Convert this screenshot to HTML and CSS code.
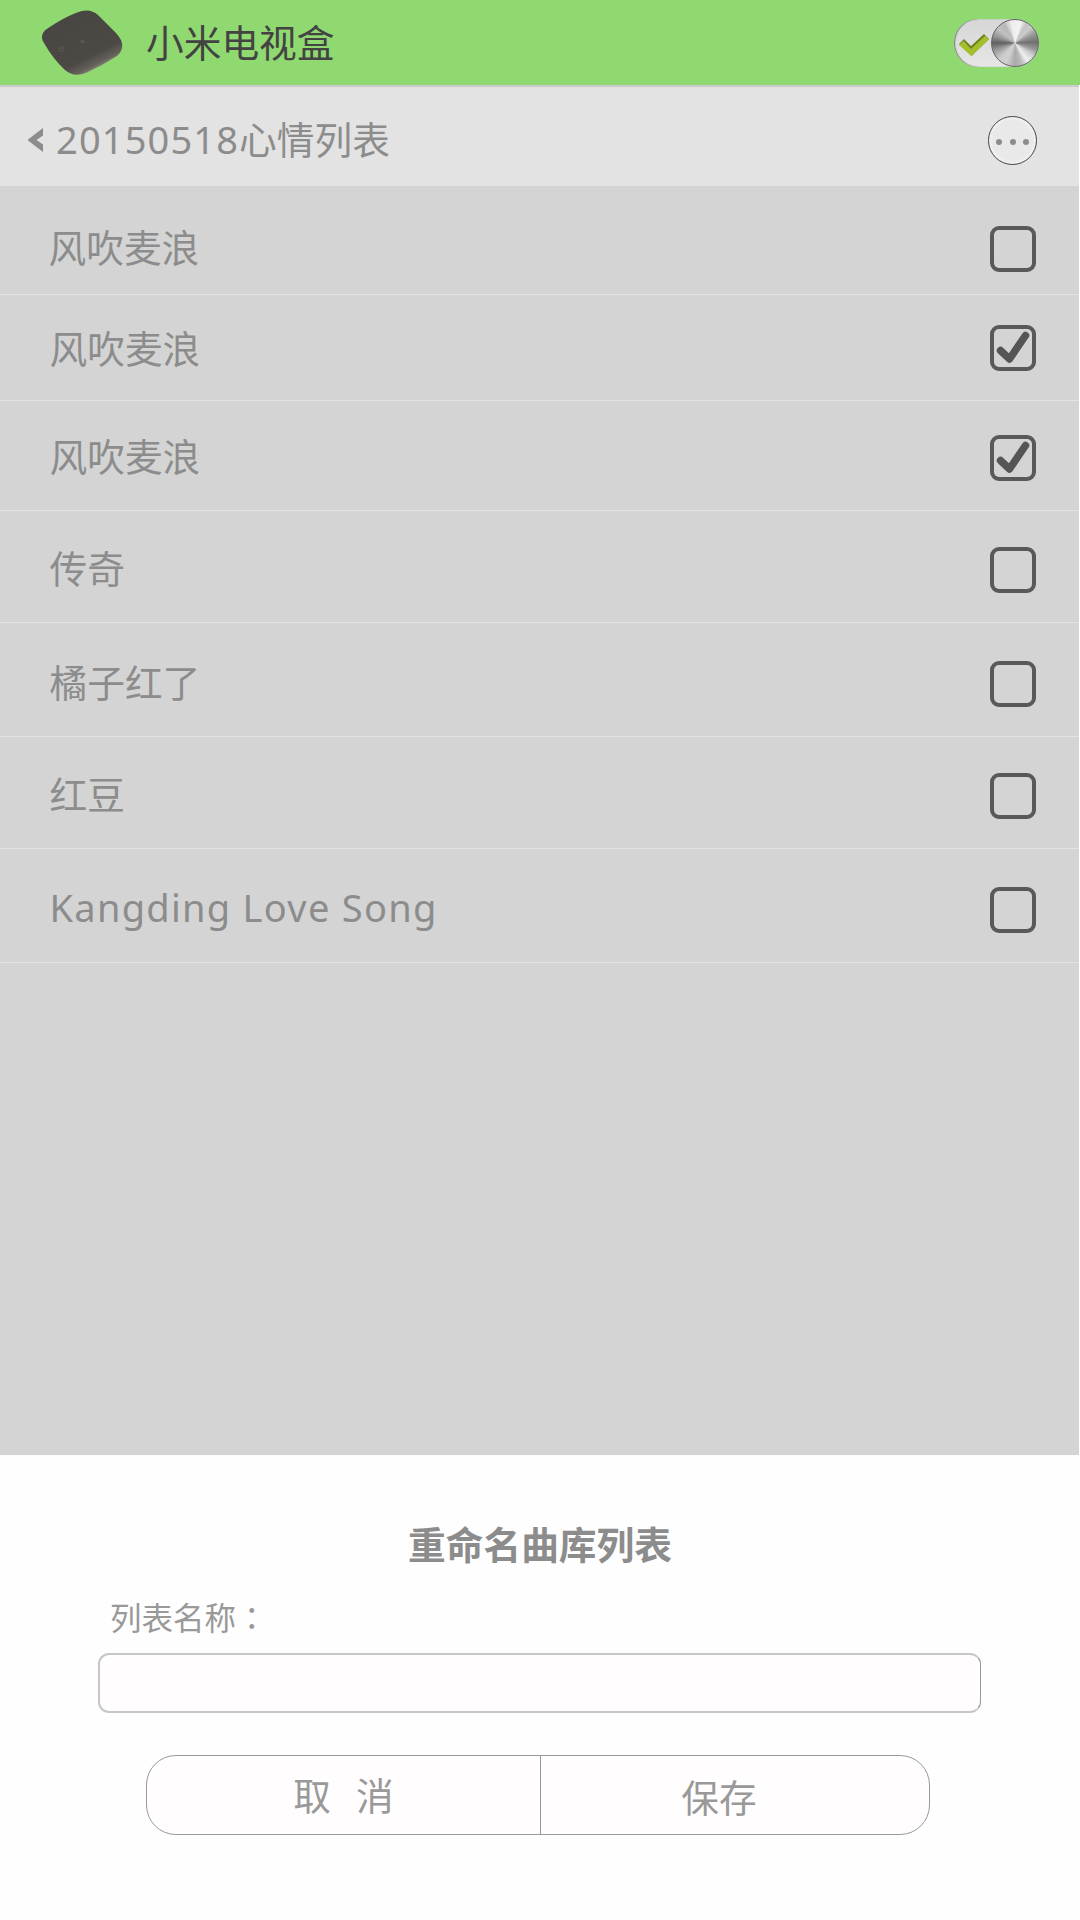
FILE: index.html
```html
<!DOCTYPE html>
<html lang="zh-CN">
<head>
<meta charset="utf-8">
<title>小米电视盒</title>
<link rel="stylesheet" href="styles.css">
</head>
<body>
<div class="screen">
  <header class="topbar">
    <svg class="device" width="84" height="68" viewBox="0 0 84 68">
      <defs>
        <linearGradient id="box" x1="0.2" y1="0.1" x2="0.72" y2="0.92">
          <stop offset="0" stop-color="#484642"/>
          <stop offset="0.75" stop-color="#4c4945"/>
          <stop offset="0.9" stop-color="#64605a"/>
          <stop offset="1" stop-color="#98948e"/>
        </linearGradient>
      </defs>
      <path d="M36 3.500Q49 -1.500 57 6L75 24Q87 37 76 47Q62 56 46 63.500Q33 69 24 61Q12 50 3 34Q-3 25 8 18.500Q22 9 36 3.500Z" fill="url(#box)"/>
      <circle cx="41.500" cy="32.500" r="2" fill="#5a5855"/>
      <path d="M18 41v-3l2 2 1-3 2 4-4 2z" fill="none" stroke="#5c5955" stroke-width="1"/>
    </svg>
    <h1 class="device-name">小米电视盒</h1>
    <div class="toggle">
      <svg class="toggle-check" width="30" height="23" viewBox="0 0 30 23">
        <path d="M0 10L5 5L12 12L25 0L30 5L12.500 22Z" fill="#6f8420"/>
        <path d="M0 11L4.500 7L12 15L26 2L30 5L12.500 22Z" fill="#a3bf2c"/>
      </svg>
      <span class="knob"></span>
    </div>
  </header>
  <nav class="subbar">
    <svg class="back" width="16" height="24" viewBox="0 0 16 24"><path d="M15 0V7.500L8.500 12L15 16.500V24L0 12.500V11.500Z" fill="#8c8c8c"/></svg>
    <h2 class="list-title"><span class="date">20150518</span>心情列表</h2>
    <span class="more"><i></i><i></i><i></i></span>
  </nav>
  <ul class="songs">
    <li class="song"><span class="name">风吹麦浪</span><span class="check"></span></li>
    <li class="song"><span class="name">风吹麦浪</span><span class="check"><svg width="46" height="46" viewBox="0 0 46 46"><path d="M10.500 25.500L19.500 34L35.500 10.500" /></svg></span></li>
    <li class="song"><span class="name">风吹麦浪</span><span class="check"><svg width="46" height="46" viewBox="0 0 46 46"><path d="M10.500 25.500L19.500 34L35.500 10.500" /></svg></span></li>
    <li class="song"><span class="name">传奇</span><span class="check"></span></li>
    <li class="song"><span class="name">橘子红了</span><span class="check"></span></li>
    <li class="song"><span class="name">红豆</span><span class="check"></span></li>
    <li class="song"><span class="name latin">Kangding Love Song</span><span class="check"></span></li>
  </ul>
  <section class="dialog">
    <h3 class="dialog-title">重命名曲库列表</h3>
    <label class="label" for="list-name">列表名称<span class="colon" lang="zh-TW">：</span></label>
    <input class="field" id="list-name" type="text">
    <div class="actions">
      <button class="btn cancel" type="button"><span>取</span><span>消</span></button>
      <button class="btn save" type="button">保存</button>
    </div>
  </section>
</div>
</body>
</html>
```
FILE: styles.css
```css
* { box-sizing: border-box; margin: 0; padding: 0; }
body {
  width: 1080px;
  height: 1920px;
  background: #fff;
  color: #8c8c8c;
  font-family: "Noto Sans CJK SC", sans-serif;
  font-size: 37.7px;
  overflow: hidden;
}
.screen { width: 1080px; height: 1920px; display: flex; flex-direction: column; }
h1, h2, h3 { font-size: inherit; font-weight: 400; }

.topbar {
  height: 85px;
  display: flex;
  align-items: flex-start;
  padding: 0 41px;
  background: #8fd970;
}
.device { margin-top: 9px; }
.device-name { margin: 13px auto 0 21px; line-height: 56px; color: #434343; white-space: nowrap; }
.toggle {
  width: 85px;
  height: 48px;
  margin-top: 18.500px;
  display: flex;
  justify-content: space-between;
  align-items: flex-start;
  padding-left: 5px;
  border-radius: 24px;
  background: linear-gradient(#d6d6d6, #e6e6e6);
  box-shadow: inset 1px 0 1px #777;
}
.toggle-check { margin-top: 15px; }
.knob {
  width: 48px;
  height: 48px;
  border-radius: 50%;
  border: 1px solid #666;
  background: conic-gradient(#eee, #f4f4f4 15deg, #c4c4c4 30deg, #ccc 45deg, #999 65deg, #707070 88deg, #999 108deg, #d0d0d0 125deg, #f0f0f0 145deg, #bbb 162deg, #aaa 180deg, #d0d0d0 205deg, #ccc 225deg, #999 250deg, #606060 270deg, #999 290deg, #c0c0c0 310deg, #b8b8b8 330deg, #eee 350deg, #eee);
}

.subbar {
  width: 1079px;
  height: 101px;
  display: flex;
  align-items: flex-start;
  padding: 0 42px 0 28px;
  border-top: 2px solid #cbcbcb;
  background: #e3e3e3;
}
.back { margin-top: 41px; }
.list-title { margin: 23px auto 0 12px; line-height: 56px; white-space: nowrap; }
.date { font-family: "Noto Sans", sans-serif; font-size: 38px; letter-spacing: 1.150px; }
.more {
  width: 49px;
  height: 49px;
  margin-top: 29px;
  display: flex;
  align-items: center;
  justify-content: center;
  gap: 7.600px;
  padding-top: 3px;
  border: 1px solid #444;
  border-radius: 50%;
  background: #e9e9e9;
  box-shadow: inset 0 0 4px #fff;
}
.more i { width: 6px; height: 6px; border-radius: 50%; background: #8c8c8c; }

.songs { width: 1079px; height: 1269px; list-style: none; background: #d4d4d4; }
.song {
  height: 112px;
  display: flex;
  align-items: flex-start;
  justify-content: space-between;
  padding: 36px 43px 0 49.500px;
  border-bottom: 1px solid #e3e3e3;
}
.song:nth-child(1) { height: 109px; padding-top: 40px; padding-left: 48.500px; }
.song:nth-child(2) { height: 106px; padding-top: 30px; }
.song:nth-child(3) { height: 110px; padding-top: 34px; }
.song:nth-child(5), .song:nth-child(7) { height: 114px; padding-top: 38px; }
.name { line-height: 40px; white-space: nowrap; }
.song:nth-child(2) .name { line-height: 44px; }
.latin { font-family: "Noto Sans", sans-serif; font-size: 38px; letter-spacing: 1.280px; }
.check { width: 46px; height: 46px; border: 4px solid #595959; border-radius: 9px; }
.check svg { display: block; margin: -4px; }
.check path { fill: none; stroke: #555; stroke-width: 7.500; stroke-linecap: round; stroke-linejoin: round; }

.dialog { height: 465px; display: flex; flex-direction: column; background: #fefefe; }
.dialog-title { margin-top: 60px; font-weight: 700; line-height: 56px; text-align: center; }
.label { margin: 23px 0 0 110px; font-size: 31.500px; line-height: 44px; color: #999; }
.colon { font-family: "Noto Sans CJK TC", sans-serif; }
.field {
  width: 883px;
  height: 60px;
  margin: 15px 0 0 98px;
  padding: 0 14px;
  border: 2px solid #c6c6c6;
  border-right: 1px solid #999;
  border-radius: 11px;
  background: #fffdfe;
  font: inherit;
}
.actions {
  width: 784px;
  height: 80px;
  margin: 42px 0 0 146px;
  display: flex;
  border: 1px solid #999;
  border-radius: 30px;
  background: #fffdfe;
}
.btn { border: 0; background: none; font: inherit; color: #999; line-height: 76px; display: flex; justify-content: center; }
.cancel { width: 394px; border-right: 1px solid #999; gap: 25px; padding-right: 0; }
.save { flex: 1; padding-right: 32px; line-height: 80px; }
```
